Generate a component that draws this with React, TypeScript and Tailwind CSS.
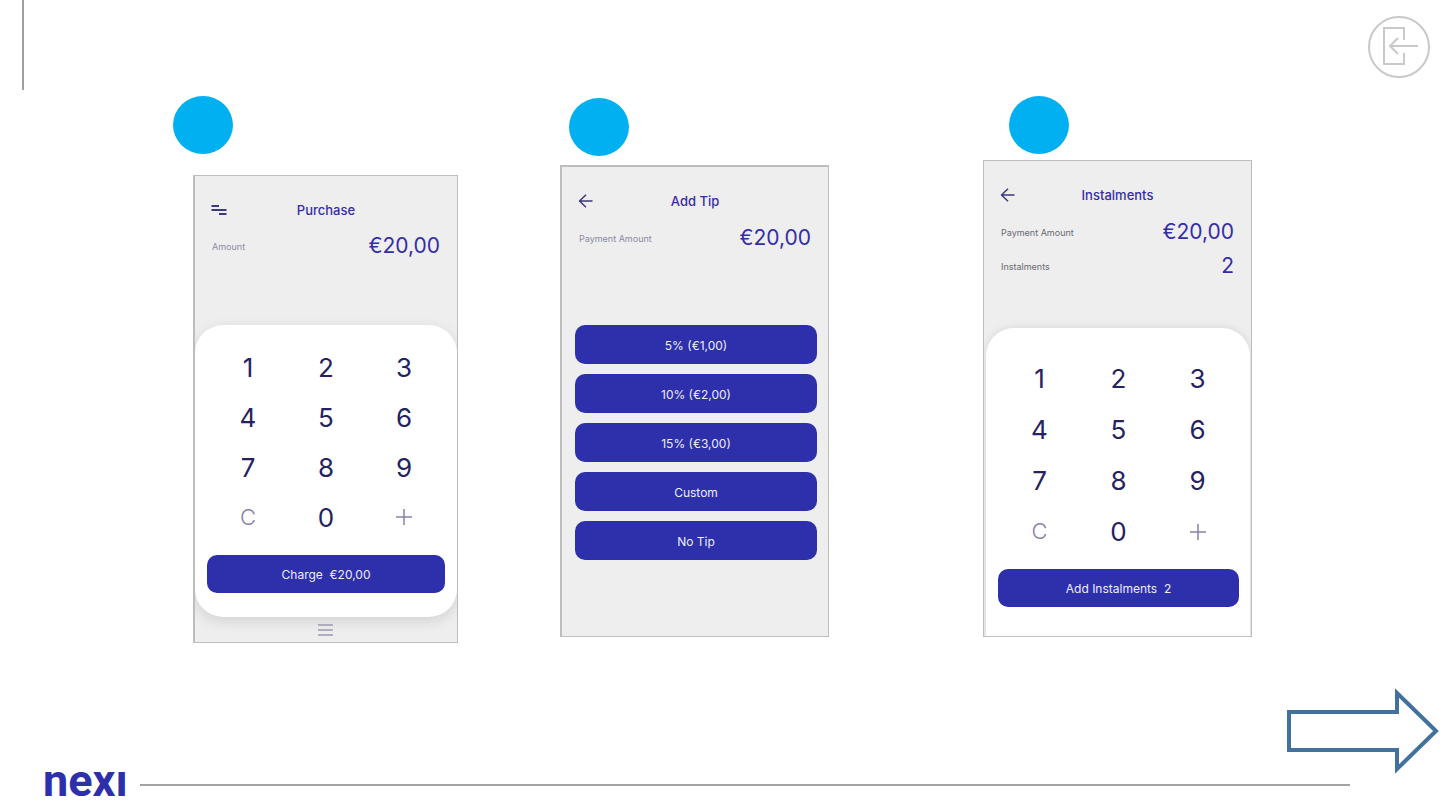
import React from "react";
import clsx from "clsx";

const keys = ["1", "2", "3", "4", "5", "6", "7", "8", "9", "C", "0", "+"];

const tips = ["5% (€1,00)", "10% (€2,00)", "15% (€3,00)", "Custom", "No Tip"];

function StepDot({ className }: { className?: string }) {
  return (
    <div
      className={clsx("h-[58px] w-[60px] rounded-[50%] bg-[#00b0f0]", className)}
    />
  );
}

function BackIcon() {
  return (
    <svg width="16" height="16" viewBox="0 0 16 16" fill="none">
      <path
        d="M14.5 8H1.5M8 1.8L1.5 8 8 14.2"
        stroke="#3b3a78"
        strokeWidth="1.5"
        strokeLinejoin="round"
      />
    </svg>
  );
}

function MenuIcon() {
  return (
    <svg width="16" height="16" viewBox="0 0 16 16" fill="none">
      <path d="M0.5 4h7.5M0.5 8h15M8 12h7.5" stroke="#3b3a78" strokeWidth="2" />
    </svg>
  );
}

type TopBarProps = { title: string; label: string; icon: React.ReactNode };

function TopBar({ title, label, icon }: TopBarProps) {
  return (
    <div className="mt-6 grid h-5 grid-cols-[20px_1fr_20px] items-center px-4">
      <button type="button" aria-label={label}>
        {icon}
      </button>
      <h2 className="text-center text-[13px] leading-5 font-medium text-[#352da8]">
        {title}
      </h2>
    </div>
  );
}

type AmountRowProps = { label: string; value: string; className?: string };

function AmountRow({ label, value, className }: AmountRowProps) {
  return (
    <div className={clsx("flex h-7 items-center justify-between px-[17px]", className)}>
      <span className="pt-1 text-[9px] leading-4">{label}</span>
      <span className="pt-[2px] text-[21px] leading-7 text-[#352da8]">{value}</span>
    </div>
  );
}

function Keypad({ keyClass }: { keyClass: string }) {
  return (
    <div className="grid grid-cols-3 px-[2px]">
      {keys.map((key) => (
        <button
          key={key}
          type="button"
          className={clsx(
            "flex items-center justify-center",
            keyClass,
            key === "C" && "text-[22px] font-light text-[#8583a8]",
            key === "+" && "text-[#8583a8]",
            key !== "C" && key !== "+" && "text-[26px] text-[#25225f]"
          )}
        >
          {key === "+" ? (
            <svg width="16" height="16" viewBox="0 0 16 16" aria-label="+">
              <path d="M8 0v16M0 8h16" stroke="currentColor" strokeWidth="1.5" />
            </svg>
          ) : (
            key
          )}
        </button>
      ))}
    </div>
  );
}

type ActionProps = { children: React.ReactNode; className?: string };

function Action({ children, className }: ActionProps) {
  return (
    <button
      type="button"
      className={clsx(
        "w-full rounded-[10px] bg-[#2d2fab] pt-[2px] text-[12px] whitespace-pre text-[#eeeefa]",
        className
      )}
    >
      {children}
    </button>
  );
}

function App() {
  return (
    <div className="flex min-h-screen flex-col bg-white font-['Inter',sans-serif]">
      <header className="flex h-[90px] items-start justify-between pr-2 pl-[22px]">
        <div className="h-full w-[2px] bg-[#a0a0a0]" />
        <button type="button" aria-label="Exit" className="mt-[14px]">
          <svg width="66" height="66" viewBox="0 0 66 66" fill="none" stroke="#c9c9c9">
            <circle cx="33" cy="33" r="30" strokeWidth="2" />
            <path d="M38 26V14H18v36h20V39" strokeWidth="2" />
            <path d="M52 32H24M32 24l-8 8 8 8" strokeWidth="2" />
          </svg>
        </button>
      </header>

      <main className="grid grid-cols-[193fr_265px_102fr_269px_154fr_269px_188fr] items-start">
        <section className="col-start-2">
          <StepDot className="mt-[6px] mb-[21px] -ml-5" />
          <div className="flex h-[468px] flex-col overflow-hidden border border-l-2 border-[#bdbdbd] bg-[#eeeeee]">
            <TopBar title="Purchase" label="Menu" icon={<MenuIcon />} />
            <AmountRow label="Amount" value="€20,00" className="mt-[11px] text-[#8a8aa3]" />
            <div className="mt-[66px] rounded-[28px] bg-white px-3 pt-[17px] pb-6 shadow-[0_4px_14px_rgba(0,0,0,0.12)]">
              <Keypad keyClass="h-[50px]" />
              <Action className="mt-[13px] h-[38px]">{"Charge  €20,00"}</Action>
            </div>
            <button type="button" aria-label="More" className="mt-[6px] self-center">
              <svg width="16" height="14" viewBox="0 0 16 14" fill="none">
                <path d="M0 2h15M0 7h15M0 12h15" stroke="#9a9ab0" strokeWidth="1.5" />
              </svg>
            </button>
          </div>
        </section>

        <section className="col-start-4">
          <StepDot className="mt-2 mb-[9px] ml-[9px]" />
          <div className="h-[472px] border border-t-2 border-l-2 border-[#bdbdbd] bg-[#eeeeee]">
            <TopBar title="Add Tip" label="Back" icon={<BackIcon />} />
            <AmountRow
              label="Payment Amount"
              value="€20,00"
              className="mt-3 text-[#8a8aa3]"
            />
            <div className="mt-[74px] flex flex-col gap-[10px] pr-[11px] pl-[13px]">
              {tips.map((tip) => (
                <Action key={tip} className="h-[39px]">
                  {tip}
                </Action>
              ))}
            </div>
          </div>
        </section>

        <section className="col-start-6">
          <StepDot className="mt-[6px] mb-[6px] ml-[26px]" />
          <div className="flex h-[477px] flex-col overflow-hidden border border-[#bdbdbd] bg-[#eeeeee]">
            <TopBar title="Instalments" label="Back" icon={<BackIcon />} />
            <AmountRow
              label="Payment Amount"
              value="€20,00"
              className="mt-3 text-[#6a6a72]"
            />
            <AmountRow label="Instalments" value="2" className="mt-[6px] text-[#6a6a72]" />
            <div className="mt-[49px] mr-px ml-[2px] flex-1 rounded-t-[28px] bg-white pt-[25px] pr-[11px] pl-3 shadow-[0_0_8px_rgba(0,0,0,0.1)]">
              <Keypad keyClass="h-[51px]" />
              <Action className="mt-3 h-[38px]">{"Add Instalments  2"}</Action>
            </div>
          </div>
        </section>
      </main>

      <button type="button" aria-label="Next" className="mt-auto self-end">
        <svg width="154" height="86" viewBox="0 0 154 86" fill="none">
          <path
            d="M3 24H111V5L150 43L111 81V62H3Z"
            stroke="#41719c"
            strokeWidth="4"
          />
        </svg>
      </button>

      <footer className="mb-[14px] flex h-[22px] items-center pr-[90px] pl-[43px]">
        <div className="w-[97px] pb-2 font-['Roboto',sans-serif] text-[45px] leading-9 font-bold text-[#2d2fab]">
          nexı
        </div>
        <div className="h-[2px] flex-1 bg-[#a3a3a3]" />
      </footer>
    </div>
  );
}

export default App;
